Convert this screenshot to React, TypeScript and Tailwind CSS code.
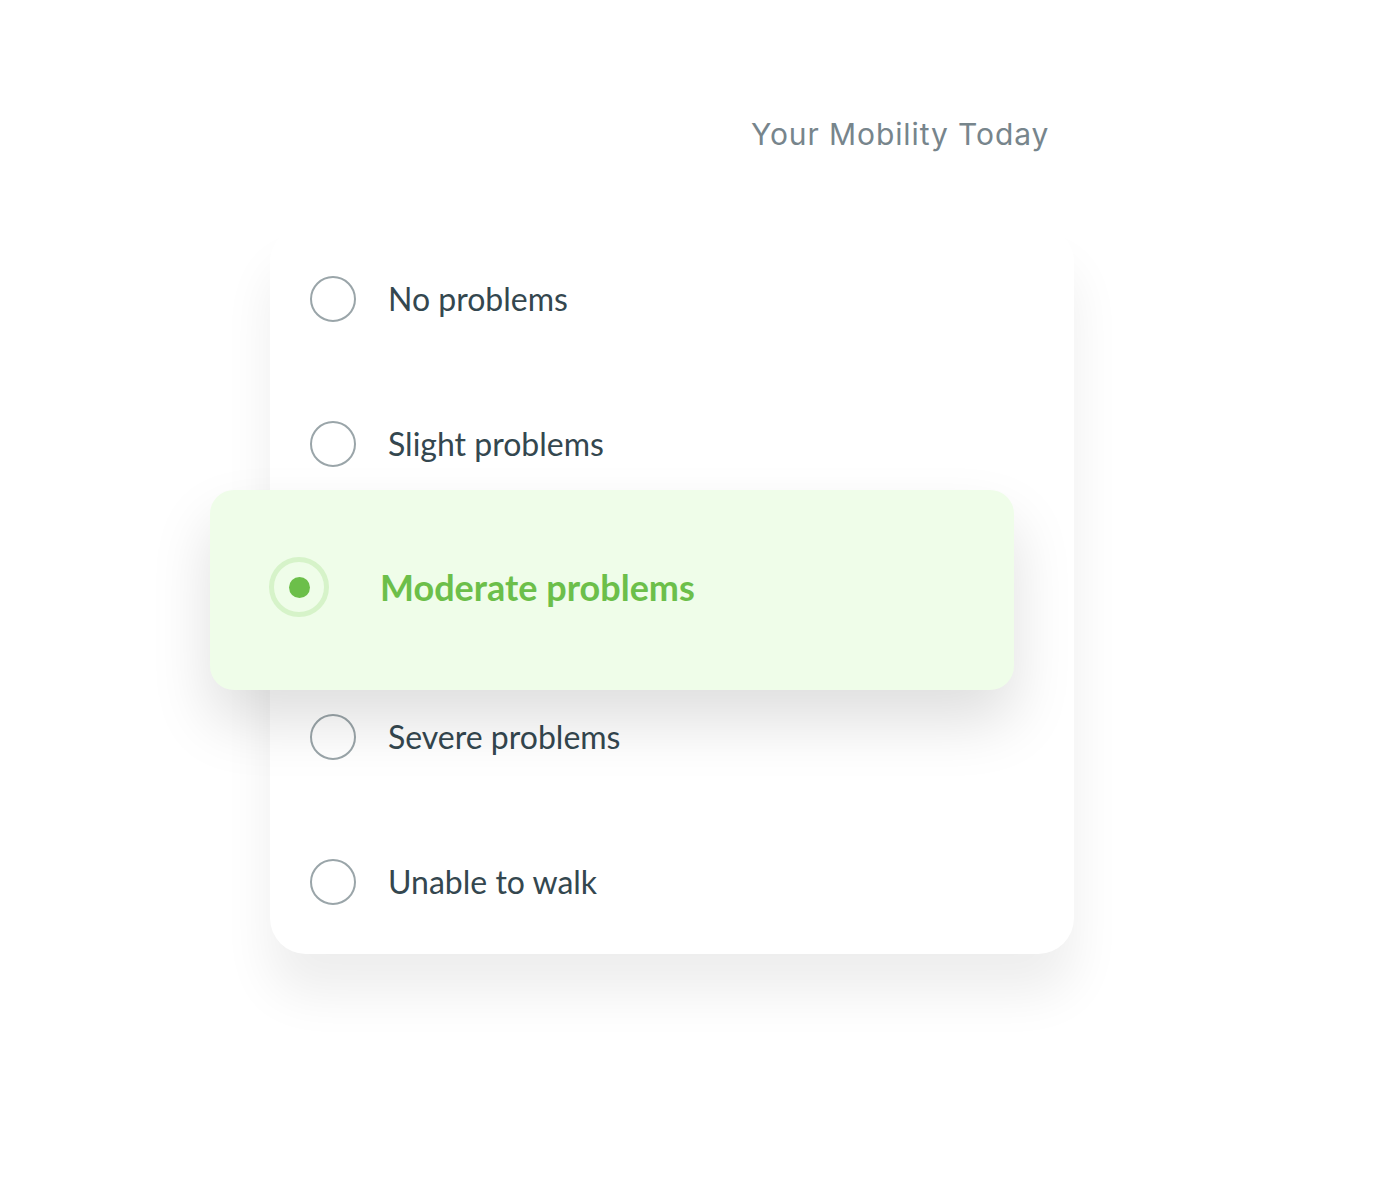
import React from "react";

type Option = { label: string; selected?: boolean };

const options: Option[] = [
  { label: "No problems" },
  { label: "Slight problems" },
  { label: "Moderate problems", selected: true },
  { label: "Severe problems" },
  { label: "Unable to walk" },
];

function OptionRow({ label, selected }: Option) {
  if (selected) {
    return (
      <div className="relative h-[148px]">
        {/* Highlighted choice floats over the card */}
        <div className="absolute left-[-60px] top-[-26px] z-10 flex h-[200px] w-[804px] items-center rounded-[24px] bg-[#effde9] pb-[6px] pl-[59px] shadow-[0_32px_60px_rgba(0,0,0,0.13)]">
          <span className="flex h-[60px] w-[60px] items-center justify-center rounded-full border-[5px] border-[#d6f3c9]">
            <span className="h-[21px] w-[21px] rounded-full bg-[#6cbf4a]" />
          </span>
          <span className="ml-[51px] font-['Lato',sans-serif] text-[36px] font-bold text-[#6cbf4a]">
            {label}
          </span>
        </div>
      </div>
    );
  }
  return (
    <div className="flex h-[145px] items-center pl-[40px]">
      <span className="h-[46px] w-[46px] rounded-full border-2 border-[#9aa5a9]" />
      <span className="ml-[32px] font-['Lato',sans-serif] text-[32px] text-[#34474f]">
        {label}
      </span>
    </div>
  );
}

export default function App() {
  return (
    <div className="min-h-[1200px] w-full bg-white pt-[114px]">
      <h2 className="ml-[751px] font-['Inter',sans-serif] text-[30px] font-normal leading-[40px] tracking-[0.9px] text-[#77858c]">
        Your Mobility Today
      </h2>
      <div className="ml-[270px] mt-[72px] w-[804px] rounded-[36px] bg-white shadow-[0_40px_50px_rgba(0,0,0,0.07)]">
        {options.map((o) => (
          <OptionRow key={o.label} {...o} />
        ))}
      </div>
    </div>
  );
}
